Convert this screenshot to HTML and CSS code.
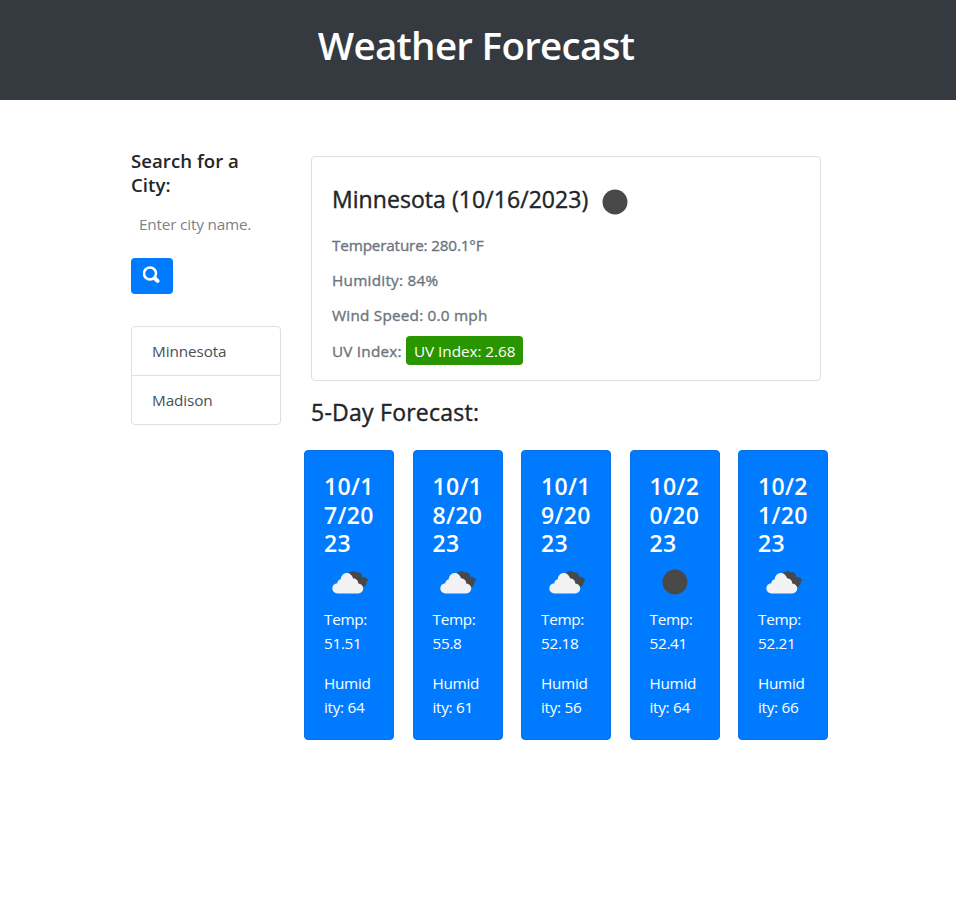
FILE: index.html
```html
<!DOCTYPE html>
<html lang="en">
<head>
<meta charset="utf-8">
<title>Weather Forecast</title>
<link rel="stylesheet" href="styles.css">
</head>
<body>
<svg width="0" height="0" class="defs" aria-hidden="true">
  <symbol id="clouds" viewBox="0 0 50 50">
    <path fill="#484848" d="M23 17q1.500-2.800 4-2.500 2.500-1.400 4.500 1 4-1.200 5.500 2.800l-.3 1.500q4.500-.5 6.600 3.500l-1.500 1q.3 3-2.300 5.500H30z"/>
    <path fill="#f2f2f2" d="M12.500 36.500a5.100 5.100 0 0 1-.2-10.200 4.500 4.500 0 0 1 3.400-4.100 6.200 6.200 0 0 1 12.300-1 5.200 5.200 0 0 1 5.300 5.300 5 5 0 0 1-.1 10z"/>
  </symbol>
  <symbol id="night" viewBox="0 0 50 50"><circle cx="25" cy="25" r="12.500" fill="#484848"/></symbol>
</svg>
<header class="banner"><h1>Weather Forecast</h1></header>
<main class="layout">
  <aside class="sidebar">
    <h2 class="search-title">Search for a<br>City:</h2>
    <div class="field"><span>Enter city name.</span></div>
    <button class="search-btn" aria-label="Search">
      <svg width="18" height="18" viewBox="0 0 18 18" fill="none" stroke="#fff"><circle cx="7" cy="7.500" r="6" stroke-width="2.500"/><path d="M12 12.500l2.600 2.400" stroke-width="4" stroke-linecap="round"/></svg>
    </button>
    <ul class="cities"><li><span>Minnesota</span></li><li><span>Madison</span></li></ul>
  </aside>
  <section class="content">
    <article class="today">
      <div class="today-head"><h2><span>Minnesota (10/16/2023)</span></h2><svg class="icon"><use href="#night"/></svg></div>
      <p class="m-temp"><span>Temperature: 280.1°F</span></p>
      <p class="m-hum"><span>Humidity: 84%</span></p>
      <p class="m-wind"><span>Wind Speed: 0.0 mph</span></p>
      <p class="m-uv"><span class="uv-label">UV Index:</span><span class="uv">UV Index: 2.68</span></p>
    </article>
    <h2 class="forecast-title"><span>5-Day Forecast:</span></h2>
    <div class="days">
      <article class="day"><h3>10/1<br>7/20<br>23</h3><svg class="icon"><use href="#clouds"/></svg><p>Temp:<br>51.51</p><p>Humid<br>ity: 64</p></article>
      <article class="day"><h3>10/1<br>8/20<br>23</h3><svg class="icon"><use href="#clouds"/></svg><p>Temp:<br>55.8</p><p>Humid<br>ity: 61</p></article>
      <article class="day"><h3>10/1<br>9/20<br>23</h3><svg class="icon"><use href="#clouds"/></svg><p>Temp:<br>52.18</p><p>Humid<br>ity: 56</p></article>
      <article class="day"><h3>10/2<br>0/20<br>23</h3><svg class="icon"><use href="#night"/></svg><p>Temp:<br>52.41</p><p>Humid<br>ity: 64</p></article>
      <article class="day"><h3>10/2<br>1/20<br>23</h3><svg class="icon"><use href="#clouds"/></svg><p>Temp:<br>52.21</p><p>Humid<br>ity: 66</p></article>
    </div>
  </section>
</main>
</body>
</html>
```
FILE: styles.css
```css
* { box-sizing: border-box; }
body { margin: 0; background: #fff; color: #212529; font: 400 15.3px/24px "Open Sans", "Noto Sans", sans-serif; white-space: nowrap; }
h1, h2, h3, p, ul { margin: 0; padding: 0; }
.defs { display: block; height: 0; }
.banner { height: 100px; padding: 21px 4px 0 0; background: #343a40; color: #fff; text-align: center; }
.banner h1 { font-size: 38.500px; line-height: 48px; font-weight: 600; letter-spacing: -.7px; }
.layout { display: flex; gap: 23px; padding: 49px 0 0 131px; }
.sidebar { width: 150px; }
.search-title { font-size: 18.600px; line-height: 24px; font-weight: 600; letter-spacing: .05px; }
.field { height: 38px; margin-top: 8px; padding: 7px 8px; color: #7b828a; letter-spacing: -.18px; }
.search-btn { display: flex; width: 42px; height: 36px; margin-top: 15px; padding: 8px 0 0 12px; border: 0; border-radius: 4px; background: #007bff; }
.cities { margin-top: 32px; border: 1px solid #dfdfdf; border-radius: 4px; list-style: none; color: #495057; letter-spacing: -.1px; }
.cities li { height: 48px; padding: 12px 20px; }
.cities li + li { height: 49px; border-top: 1px solid #dfdfdf; }
.content { width: 524px; padding-top: 7px; }
.today { width: 510px; height: 225px; margin-left: 7px; padding: 20px; border: 1px solid #dfdfdf; border-radius: 4px; }
.today-head { display: flex; height: 50px; }
.today h2, .forecast-title { font-size: 23px; line-height: 29px; font-weight: 500; letter-spacing: .06px; -webkit-text-stroke: .4px currentColor; }
.today h2 { padding-top: 8px; }
.icon { display: block; width: 50px; height: 50px; }
.today .icon { margin: 0 0 0 1.4px; }
.today p { color: #6c757d; height: 24px; margin-bottom: 11px; -webkit-text-stroke: .35px currentColor; }
.today .m-temp { margin-top: 6px; letter-spacing: -.18px; }
.m-hum { letter-spacing: .25px; }
.m-wind { letter-spacing: .22px; }
.today .m-uv { display: flex; align-items: center; gap: 4px; height: 29px; margin-top: -2px; }
.uv-label { width: 70px; letter-spacing: .2px; }
.uv { width: 117px; height: 29px; padding: 3px 8px; border-radius: 4px; background: #299600; color: #fff; letter-spacing: -.05px; -webkit-text-stroke: 0; }
.forecast-title { margin: 17px 0 0 7px; letter-spacing: .25px; }
.days { display: flex; justify-content: space-between; margin-top: 23px; }
.day { width: 90px; height: 290px; padding: 21px 19px 0; border: 1px solid #0871e3; border-radius: 4px; background: #007bff; color: #fff; }
.day h3 { font-size: 23px; line-height: 28.500px; font-weight: 600; letter-spacing: .3px; }
.day .icon { margin: -.5px 0 -.5px .5px; }
.day p { margin-bottom: 16px; letter-spacing: -.3px; }
```
